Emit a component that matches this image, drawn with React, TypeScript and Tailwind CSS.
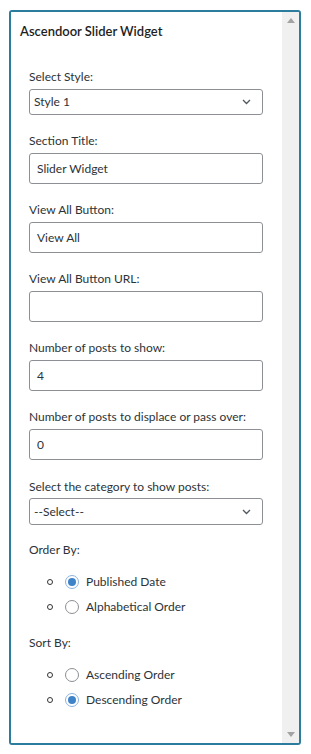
import React from "react";

const font = { fontFamily: "'Segoe UI', Lato, 'Open Sans', sans-serif" };

function Label({ children }: { children: React.ReactNode }) {
  return <div className="h-[18px] flex items-center text-[12px] text-[#2c3338]">{children}</div>;
}

function TextField({ value }: { value: string }) {
  return (
    <div className="mt-[3px] h-[31px] w-[234px] rounded-[3px] border border-[#8c8f94] bg-white flex items-center pl-[7px] text-[12px] text-[#2c3338]">
      {value}
    </div>
  );
}

function SelectField({ value, h }: { value: string; h: string }) {
  return (
    <div className={`${h} w-[234px] rounded-[3px] border border-[#8c8f94] bg-white flex items-center justify-between pl-[4px] pr-[11px] text-[12px] text-[#2c3338]`}>
      <span>{value}</span>
      <svg width="9" height="6" viewBox="0 0 9 6" fill="none">
        <path d="M1 1l3.5 3.5L8 1" stroke="#50575e" strokeWidth="1.3" />
      </svg>
    </div>
  );
}

function Radio({ label, checked }: { label: string; checked?: boolean }) {
  return (
    <div className="h-[25px] flex items-center text-[12px] text-[#2c3338]">
      <span className="ml-[18px] w-[6px] h-[6px] rounded-full border border-[#333]" />
      <span
        className={`ml-[12px] w-[14px] h-[14px] rounded-full border flex items-center justify-center ${
          checked ? "border-[#8cb4de]" : "border-[#8c8f94]"
        }`}
      >
        {checked && <span className="w-[8px] h-[8px] rounded-full bg-[#3f84c9]" />}
      </span>
      <span className="ml-[7px]">{label}</span>
    </div>
  );
}

export default function App() {
  return (
    <div className="w-[311px] h-[754px] bg-white pt-[10px] pl-[9px]" style={font}>
      <div className="w-[292px] h-[735px] border-2 border-[#2b7c9d] rounded-[3px] flex overflow-hidden">
        <div className="flex-1 bg-white">
          <div className="h-[38px] flex items-center pl-[9px] pt-[1px] text-[13px] font-semibold text-[#1e1e1e]">
            Ascendoor Slider Widget
          </div>
          <div className="pl-[18px]">
            <div className="mt-[18px]">
              <Label>Select Style:</Label>
              <div className="mt-[3px]">
                <SelectField value="Style 1" h="h-[26px]" />
              </div>
            </div>
            <div className="mt-[17px]">
              <Label>Section Title:</Label>
              <TextField value="Slider Widget" />
            </div>
            <div className="mt-[17px]">
              <Label>View All Button:</Label>
              <TextField value="View All" />
            </div>
            <div className="mt-[17px]">
              <Label>View All Button URL:</Label>
              <TextField value="" />
            </div>
            <div className="mt-[17px]">
              <Label>Number of posts to show:</Label>
              <TextField value="4" />
            </div>
            <div className="mt-[17px]">
              <Label>Number of posts to displace or pass over:</Label>
              <TextField value="0" />
            </div>
            <div className="mt-[18px]">
              <Label>Select the category to show posts:</Label>
              <div className="mt-[2px]">
                <SelectField value="--Select--" h="h-[27px]" />
              </div>
            </div>
            <div className="mt-[16px]">
              <Label>Order By:</Label>
              <div className="mt-[10px]">
                <Radio label="Published Date" checked />
                <Radio label="Alphabetical Order" />
              </div>
            </div>
            <div className="mt-[15px]">
              <Label>Sort By:</Label>
              <div className="mt-[10px]">
                <Radio label="Ascending Order" />
                <Radio label="Descending Order" checked />
              </div>
            </div>
          </div>
        </div>
        <div className="w-[17px] bg-[#f0f0f0] flex flex-col items-center justify-between py-[6px]">
          <svg width="8" height="5" viewBox="0 0 8 5">
            <path d="M0 5L4 0L8 5Z" fill="#a3a3a3" />
          </svg>
          <svg width="8" height="5" viewBox="0 0 8 5">
            <path d="M0 0L4 5L8 0Z" fill="#a3a3a3" />
          </svg>
        </div>
      </div>
    </div>
  );
}
